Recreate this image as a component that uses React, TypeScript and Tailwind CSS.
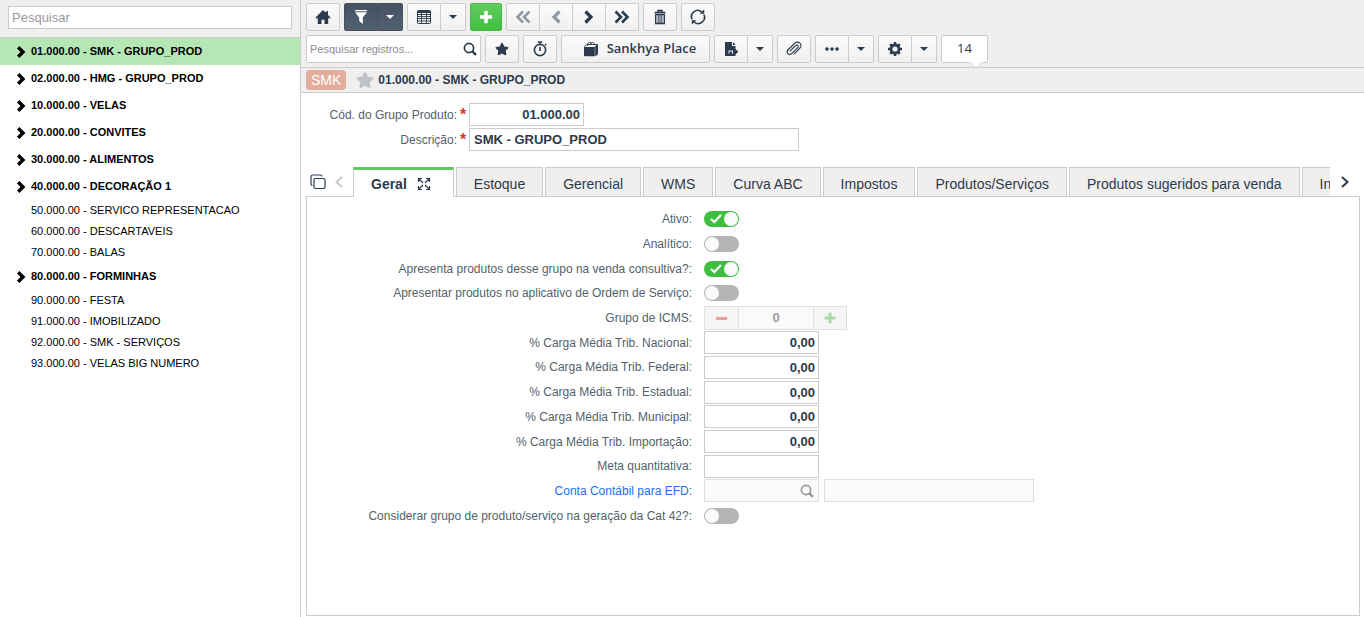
import { useState, type ReactNode } from "react";
import { FaStar } from "react-icons/fa";

type IconProps = { className?: string };

const HomeIcon = () => (
  <svg viewBox="0 0 16 16" className="size-4" fill="currentColor">
    <path d="M8 1 .5 8.500l1 1.200 1.300-1V15h3.700v-4.200h3V15h3.700V8.700l1.300 1 1-1.200L13 6V2.200h-2.300v1.500z" />
  </svg>
);

const FilterIcon = () => (
  <svg viewBox="0 0 16 16" className="size-4" fill="currentColor">
    <path d="M2 1h12v1.300H2zM2 3.300h12L9.800 8.500V15L6.200 12V8.500z" />
  </svg>
);

const TableIcon = () => (
  <svg viewBox="0 0 16 16" className="size-4" fill="none" stroke="currentColor">
    <rect x="1.5" y="1.5" width="13" height="13" rx="1" />
    <path d="M1 3h14" strokeWidth="2" />
    <path d="M1 5.500h14M1 7.500h14M1 9.500h14M1 12h14M5.500 4v11M10.500 4v11" strokeWidth=".9" />
  </svg>
);

const PlusIcon = ({ className = "size-4" }: IconProps) => (
  <svg viewBox="0 0 16 16" className={className} stroke="currentColor" strokeWidth="4">
    <path d="M8 1v14M1 8h14" />
  </svg>
);

const ChevronIcon = ({ className = "size-4" }: IconProps) => (
  <svg viewBox="0 0 16 16" className={className} fill="none" stroke="currentColor" strokeWidth="3.200">
    <path d="m4.5 2.500 5.500 5.500-5.500 5.500" />
  </svg>
);

const TreeArrowIcon = () => (
  <svg viewBox="0 0 12 12" className="size-3" fill="none" stroke="currentColor" strokeWidth="3.400">
    <path d="m3.200 1.200 4.800 4.800-4.800 4.800" />
  </svg>
);

const DoubleChevronIcon = ({ className = "size-4" }: IconProps) => (
  <svg viewBox="0 0 16 16" className={className} fill="none" stroke="currentColor" strokeWidth="2.600">
    <path d="m1.500 2.500 5.500 5.500-5.500 5.500M8 2.500l5.500 5.500L8 13.500" />
  </svg>
);

const ThinChevronIcon = ({ className = "size-4" }: IconProps) => (
  <svg viewBox="0 0 16 16" className={className} fill="none" stroke="currentColor" strokeWidth="2">
    <path d="m5 3 5.5 5L5 13" />
  </svg>
);

const TrashIcon = () => (
  <svg viewBox="0 0 16 16" className="size-4" fill="none" stroke="currentColor">
    <path d="M2.500 3.500h11M6 3V1.500h4V3" strokeWidth="1.500" />
    <path d="M3.700 5.500h8.600v9H3.700z" strokeWidth="1.400" />
    <path d="M6.200 6v8M8 6v8M9.800 6v8" />
  </svg>
);

const RefreshIcon = () => (
  <svg viewBox="0 0 16 16" className="size-4" fill="none" stroke="currentColor" strokeWidth="1.6">
    <path d="M2.2 10.5A6.2 6.2 0 0 1 11.8 3M13.8 5.5A6.2 6.2 0 0 1 4.2 13" />
    <path d="M9.500 4.800h4.700V.5zM6.500 11.200H1.800v4.300z" fill="currentColor" stroke="none" />
  </svg>
);

const SearchIcon = ({ className = "size-4" }: IconProps) => (
  <svg viewBox="0 0 16 16" className={className} fill="none" stroke="currentColor">
    <circle cx="7" cy="7" r="4.6" strokeWidth="1.7" />
    <path d="m10.2 10.2 3.8 3.8" strokeWidth="2.4" />
  </svg>
);

const StopwatchIcon = () => (
  <svg viewBox="0 0 16 16" className="size-4" fill="none" stroke="currentColor">
    <circle cx="8" cy="9" r="5.6" strokeWidth="1.6" />
    <path d="M5.8 1h4.4M8 1v2M13 3l1.3 1.3" strokeWidth="1.4" />
    <path d="M8 5.8V10" strokeWidth="1.6" />
  </svg>
);

const BagIcon = () => (
  <svg viewBox="0 0 16 16" className="size-4" fill="currentColor">
    <path d="M1 6h10.800v9.200H2.200A1.200 1.200 0 0 1 1 14zM12.200 5.800 15 4v9.300l-2.800 1.900z" />
    <path d="M1.300 5.600 3.800 3.500h11l-3 2.300M4.500 5V3.200C5 .8 8.200.8 8.500 3.200M7.300 3.200C7.800.8 11.200.8 11.500 3.200" fill="none" stroke="currentColor" strokeWidth=".9" />
  </svg>
);

const FileExportIcon = () => (
  <svg viewBox="0 0 16 16" className="size-4" fill="currentColor">
    <path fillRule="evenodd" d="M2 1h7v4h3.500v3l2.800 2.800-2.800 2.800V15H2zM5.500 9.500v3h1v-2H9v2.200h1V9.500z" />
    <path d="M10 1v3h2.800z" />
  </svg>
);

const PaperclipIcon = () => (
  <svg viewBox="0 0 16 16" className="size-4" fill="none" stroke="currentColor" strokeWidth="1.2" strokeLinecap="round">
    <path d="m4.300 9.800 5.600-5.600a1.500 1.500 0 0 1 2.100 2.100l-6.400 6.400a2.600 2.600 0 0 1-3.700-3.700l6.900-6.900a3.600 3.600 0 0 1 5.100 5.100L8.300 12.800" />
  </svg>
);

const DotsIcon = () => (
  <svg viewBox="0 0 16 16" className="size-4" fill="currentColor">
    <circle cx="3" cy="8" r="1.800" />
    <circle cx="8" cy="8" r="1.800" />
    <circle cx="13" cy="8" r="1.800" />
  </svg>
);

const GearIcon = () => (
  <svg viewBox="0 0 16 16" className="size-4" fill="none" stroke="currentColor">
    <circle cx="8" cy="8" r="4" strokeWidth="2.800" />
    <path d="M8 1v3M8 12v3M1 8h3M12 8h3M3.200 3.200l2 2M10.800 10.800l2 2M12.800 3.200l-2 2M5.200 10.800l-2 2" strokeWidth="2.600" />
  </svg>
);

const CaretIcon = () => (
  <svg viewBox="0 0 8 4" className="h-1 w-2" fill="currentColor">
    <path d="M0 0h8L4 4z" />
  </svg>
);

const CopyIcon = () => (
  <svg viewBox="0 0 16 16" className="size-4" fill="none" stroke="currentColor" strokeWidth="1.200">
    <rect x="4" y="4.500" width="11" height="10" rx="1.500" />
    <path d="M2.500 11.500A1.500 1.500 0 0 1 1 10V2.500A1.500 1.500 0 0 1 2.500 1h8a1.500 1.500 0 0 1 1.500 1.500" />
  </svg>
);

const ExpandIcon = () => (
  <svg viewBox="0 0 14 14" className="size-3.5" fill="none" stroke="currentColor" strokeWidth="1.200">
    <path d="M1.500 5V1.500H5M9 1.500h3.500V5M12.500 9v3.500H9M5 12.500H1.500V9M2 2l4 4M12 2 8 6M12 12 8 8M2 12l4-4" />
  </svg>
);

const buttonBox = "flex h-7 items-center justify-center border";
const lightTone = "border-[#ccc] bg-linear-to-b from-[#fbfbfb] to-[#f0f0f0]";
const darkTone = "border-[#445060] bg-linear-to-b from-[#465263] to-[#536070] text-white";

function ToolButton({ label, children }: { label: string; children: ReactNode }) {
  return (
    <button type="button" aria-label={label} className={`${buttonBox} ${lightTone} w-[34px] rounded-xs`}>
      {children}
    </button>
  );
}

function SplitButton({ label, dark = false, children }: { label: string; dark?: boolean; children: ReactNode }) {
  const tone = dark ? darkTone : lightTone;
  return (
    <div className="flex">
      <button type="button" aria-label={label} className={`${buttonBox} ${tone} w-[34px] rounded-l-xs`}>
        {children}
      </button>
      <button type="button" aria-label={`${label}: opções`} className={`${buttonBox} ${tone} w-[25px] rounded-r-xs border-l-0`}>
        <CaretIcon />
      </button>
    </div>
  );
}

function Toggle({ id, defaultChecked = false }: { id: string; defaultChecked?: boolean }) {
  return (
    <span className="relative flex h-4 w-[35px]">
      <input
        id={id}
        type="checkbox"
        defaultChecked={defaultChecked}
        className="peer h-4 w-[35px] appearance-none rounded-full bg-[#b5b5b5] checked:bg-[#3fbf3f]"
      />
      <span className="pointer-events-none absolute top-px left-px size-3.5 rounded-full bg-[#fafafa] peer-checked:left-5" />
      <svg viewBox="0 0 12 10" className="pointer-events-none absolute top-[3px] left-1.5 hidden h-2.5 w-3 peer-checked:block" fill="none" stroke="white" strokeWidth="2.200">
        <path d="m1 5 3.300 3L11 1" />
      </svg>
    </span>
  );
}

const tree = [
  { label: "01.000.00 - SMK - GRUPO_PROD", parent: true },
  { label: "02.000.00 - HMG - GRUPO_PROD", parent: true },
  { label: "10.000.00 - VELAS", parent: true },
  { label: "20.000.00 - CONVITES", parent: true },
  { label: "30.000.00 - ALIMENTOS", parent: true },
  { label: "40.000.00 - DECORAÇÃO 1", parent: true },
  { label: "50.000.00 - SERVICO REPRESENTACAO", parent: false },
  { label: "60.000.00 - DESCARTAVEIS", parent: false },
  { label: "70.000.00 - BALAS", parent: false },
  { label: "80.000.00 - FORMINHAS", parent: true },
  { label: "90.000.00 - FESTA", parent: false },
  { label: "91.000.00 - IMOBILIZADO", parent: false },
  { label: "92.000.00 - SMK - SERVIÇOS", parent: false },
  { label: "93.000.00 - VELAS BIG NUMERO", parent: false },
];

function Sidebar() {
  const [selected, setSelected] = useState(0);

  return (
    <aside className="w-[301px] shrink-0 border-r border-[#ccc]">
      <div className="border-b border-[#ccc] bg-[#efefef] px-2 pt-1.5 pb-2">
        <input
          type="search"
          aria-label="Pesquisar grupos"
          placeholder="Pesquisar"
          className="block h-[23px] w-full border border-[#ccc] bg-white px-[3px] text-[13px] placeholder:text-[#999]"
        />
      </div>
      <ul className="text-[11px] text-black">
        {tree.map((item, i) => (
          <li key={item.label}>
            <button
              type="button"
              onClick={() => setSelected(i)}
              className={`flex w-full items-center pl-[15px] text-left ${item.parent ? "h-[27px] font-bold" : "h-[21px]"} ${i === selected ? "bg-[#b5e7b5]" : ""}`}
            >
              <span className="flex w-4 shrink-0">{item.parent && <TreeArrowIcon />}</span>
              {item.label}
            </button>
          </li>
        ))}
      </ul>
    </aside>
  );
}

function Toolbar() {
  return (
    <div className="flex flex-col gap-1 border-b border-[#ccc] bg-[#f0efee] px-[5px] pt-[3px] pb-1">
      <div className="flex gap-1">
        <ToolButton label="Início"><HomeIcon /></ToolButton>
        <SplitButton label="Filtro" dark><FilterIcon /></SplitButton>
        <SplitButton label="Modo grade"><TableIcon /></SplitButton>
        <button type="button" aria-label="Adicionar" className="flex h-7 w-8 items-center justify-center rounded-xs border border-[#45b945] bg-linear-to-b from-[#60cc60] to-[#3fbf3f] text-white">
          <PlusIcon className="size-3.5" />
        </button>
        <div className="flex">
          <button type="button" aria-label="Primeiro" className={`${buttonBox} ${lightTone} w-[34px] rounded-l-xs text-[#9299a3]`}>
            <DoubleChevronIcon className="size-4 rotate-180" />
          </button>
          <button type="button" aria-label="Anterior" className={`${buttonBox} ${lightTone} w-[33px] border-l-0 text-[#9299a3]`}>
            <ChevronIcon className="size-4 rotate-180" />
          </button>
          <button type="button" aria-label="Próximo" className={`${buttonBox} ${lightTone} w-[33px] border-l-0`}>
            <ChevronIcon />
          </button>
          <button type="button" aria-label="Último" className={`${buttonBox} ${lightTone} w-[33px] rounded-r-xs border-l-0`}>
            <DoubleChevronIcon />
          </button>
        </div>
        <ToolButton label="Excluir"><TrashIcon /></ToolButton>
        <ToolButton label="Atualizar"><RefreshIcon /></ToolButton>
      </div>

      <div className="flex gap-1">
        <div className="flex h-7 w-[175px] items-center rounded-xs border border-[#ccc] bg-white pr-0.5 pl-[3px]">
          <input
            type="search"
            aria-label="Pesquisar registros"
            placeholder="Pesquisar registros..."
            className="min-w-0 flex-1 text-[11px] outline-none placeholder:text-[#8c8c8c]"
          />
          <button type="button" aria-label="Buscar"><SearchIcon /></button>
        </div>
        <ToolButton label="Favorito"><FaStar className="size-3.5" /></ToolButton>
        <ToolButton label="Cronômetro"><StopwatchIcon /></ToolButton>
        <button type="button" className={`${buttonBox} ${lightTone} w-[149px] gap-2 rounded-xs pl-2 font-['Open_Sans'] text-[13px] font-semibold`}>
          <BagIcon />
          Sankhya Place
        </button>
        <SplitButton label="Exportar"><FileExportIcon /></SplitButton>
        <ToolButton label="Anexos"><PaperclipIcon /></ToolButton>
        <SplitButton label="Mais"><DotsIcon /></SplitButton>
        <SplitButton label="Configurações"><GearIcon /></SplitButton>
        <div className="relative flex h-7 w-[47px] items-center justify-center rounded-xs border border-[#ccc] bg-white font-['Open_Sans'] text-[13px]">
          14
          <svg viewBox="0 0 12 7" className="absolute -bottom-[7px] left-7 h-[7px] w-3">
            <path d="M0 0h12L6 6z" fill="white" />
            <path d="m0 .5 6 6 6-6" fill="none" stroke="#ccc" />
          </svg>
        </div>
      </div>
    </div>
  );
}

const inputBox = "h-[23px] border border-[#ccc] bg-white pr-[3px] pl-1 text-[13px] font-bold";

function Header() {
  return (
    <div className="grid grid-cols-[163px_1fr] gap-y-0.5 px-[5px] pt-2.5 text-xs">
      <label htmlFor="codigo" className="flex items-center justify-end text-[#535f6b]">
        Cód. do Grupo Produto:
        <span className="w-3 pl-[3px] text-base leading-4 font-bold text-[#d9392d]">*</span>
      </label>
      <input id="codigo" defaultValue="01.000.00" className={`${inputBox} w-[115px] text-right`} />
      <label htmlFor="descricao" className="flex items-center justify-end text-[#535f6b]">
        Descrição:
        <span className="w-3 pl-[3px] text-base leading-4 font-bold text-[#d9392d]">*</span>
      </label>
      <input id="descricao" defaultValue="SMK - GRUPO_PROD" className={`${inputBox} w-[330px]`} />
    </div>
  );
}

const tabs = [
  "Estoque",
  "Gerencial",
  "WMS",
  "Curva ABC",
  "Impostos",
  "Produtos/Serviços",
  "Produtos sugeridos para venda",
  "In",
];

function TabBar() {
  return (
    <div className="relative z-10 -mb-px flex h-[30px] items-stretch">
      <div className="flex w-[47px] shrink-0 items-center gap-[5px] pl-1">
        <button type="button" aria-label="Duplicar aba"><CopyIcon /></button>
        <button type="button" aria-label="Abas anteriores" className="text-[#c4c8cc]">
          <ThinChevronIcon className="size-4 rotate-180" />
        </button>
      </div>
      <div role="tablist" className="flex min-w-0 flex-1 gap-0.5 overflow-hidden text-sm">
        <button type="button" role="tab" aria-selected="true" className="flex shrink-0 items-center gap-2.5 border-x border-t-3 border-x-[#ccc] border-t-[#5fcb5f] bg-white pr-[22px] pl-[17px] font-bold">
          Geral
          <ExpandIcon />
        </button>
        {tabs.map((tab) => (
          <button key={tab} type="button" role="tab" aria-selected="false" className="shrink-0 border border-[#ccc] bg-[#f0efee] px-[17px] pt-1 whitespace-nowrap">
            {tab}
          </button>
        ))}
      </div>
      <button type="button" aria-label="Próximas abas" className="flex w-[30px] shrink-0 items-center justify-center">
        <ThinChevronIcon />
      </button>
    </div>
  );
}

function Row({ id, label, link = false, children }: { id: string; label: string; link?: boolean; children: ReactNode }) {
  return (
    <div className="grid grid-cols-[385px_1fr] items-center gap-x-3">
      <label htmlFor={id} className={`text-right ${link ? "text-[#1a6ff5]" : "text-[#535f6b]"}`}>
        {label}
      </label>
      <div className="flex items-center">{children}</div>
    </div>
  );
}

const rates = ["Nacional", "Federal", "Estadual", "Municipal", "Importação"];

function GeneralPanel() {
  return (
    <div role="tabpanel" className="flex-1 border border-[#ccc] pt-2.5 text-xs">
      <div className="grid h-[321px] auto-rows-fr">
        <Row id="ativo" label="Ativo:"><Toggle id="ativo" defaultChecked /></Row>
        <Row id="analitico" label="Analítico:"><Toggle id="analitico" /></Row>
        <Row id="consultiva" label="Apresenta produtos desse grupo na venda consultiva?:">
          <Toggle id="consultiva" defaultChecked />
        </Row>
        <Row id="ordem" label="Apresentar produtos no aplicativo de Ordem de Serviço:">
          <Toggle id="ordem" />
        </Row>
        <Row id="icms" label="Grupo de ICMS:">
          <div className="flex h-6 w-[143px] border border-[#e0e0e0]">
            <button type="button" disabled aria-label="Diminuir" className="flex w-[33px] items-center justify-center bg-[#f5f5f5]">
              <span className="h-[3px] w-[11px] bg-[#e8a198]" />
            </button>
            <input id="icms" disabled defaultValue="0" className="min-w-0 flex-1 border-x border-[#e0e0e0] bg-[#fafafa] text-center text-[13px] font-bold text-[#98a0a8]" />
            <button type="button" disabled aria-label="Aumentar" className="flex w-8 items-center justify-center bg-[#f5f5f5] text-[#a5dca5]">
              <PlusIcon className="size-3" />
            </button>
          </div>
        </Row>
        {rates.map((rate) => (
          <Row key={rate} id={rate} label={`% Carga Média Trib. ${rate}:`}>
            <input id={rate} defaultValue="0,00" className={`${inputBox} w-[115px] text-right`} />
          </Row>
        ))}
        <Row id="meta" label="Meta quantitativa:">
          <input id="meta" className={`${inputBox} w-[115px]`} />
        </Row>
        <Row id="conta" label="Conta Contábil para EFD:" link>
          <div className="flex h-[23px] w-[115px] items-center border border-[#e0e0e0] bg-[#fafafa] pr-[3px]">
            <input id="conta" disabled className="min-w-0 flex-1" />
            <button type="button" disabled aria-label="Pesquisar conta" className="text-[#999]"><SearchIcon /></button>
          </div>
          <input disabled aria-label="Descrição da conta" className="ml-[5px] h-[23px] w-[210px] border border-[#e0e0e0] bg-[#fafafa]" />
        </Row>
        <Row id="cat42" label="Considerar grupo de produto/serviço na geração da Cat 42?:">
          <Toggle id="cat42" />
        </Row>
      </div>
    </div>
  );
}

export default function App() {
  return (
    <div className="flex min-h-screen bg-white font-['Liberation_Sans',Arial,sans-serif] text-[#2b3a4d]">
      <Sidebar />
      <main className="flex min-w-0 flex-1 flex-col">
        <Toolbar />
        <div className="flex h-[25px] items-center border-b border-[#ccc] bg-[#efefef] px-[5px]">
          <span className="flex h-5 items-center rounded-sm bg-[#e2ad9c] px-[5px] text-sm text-white">SMK</span>
          <button type="button" aria-label="Favoritar registro" className="mr-1 ml-2.5 text-[#bfc2c8]">
            <FaStar className="size-[18px]" />
          </button>
          <h1 className="text-xs font-bold">01.000.00 - SMK - GRUPO_PROD</h1>
        </div>
        <Header />
        <section className="flex flex-1 flex-col pt-4 pr-1 pb-px pl-[5px]">
          <TabBar />
          <GeneralPanel />
        </section>
      </main>
    </div>
  );
}
